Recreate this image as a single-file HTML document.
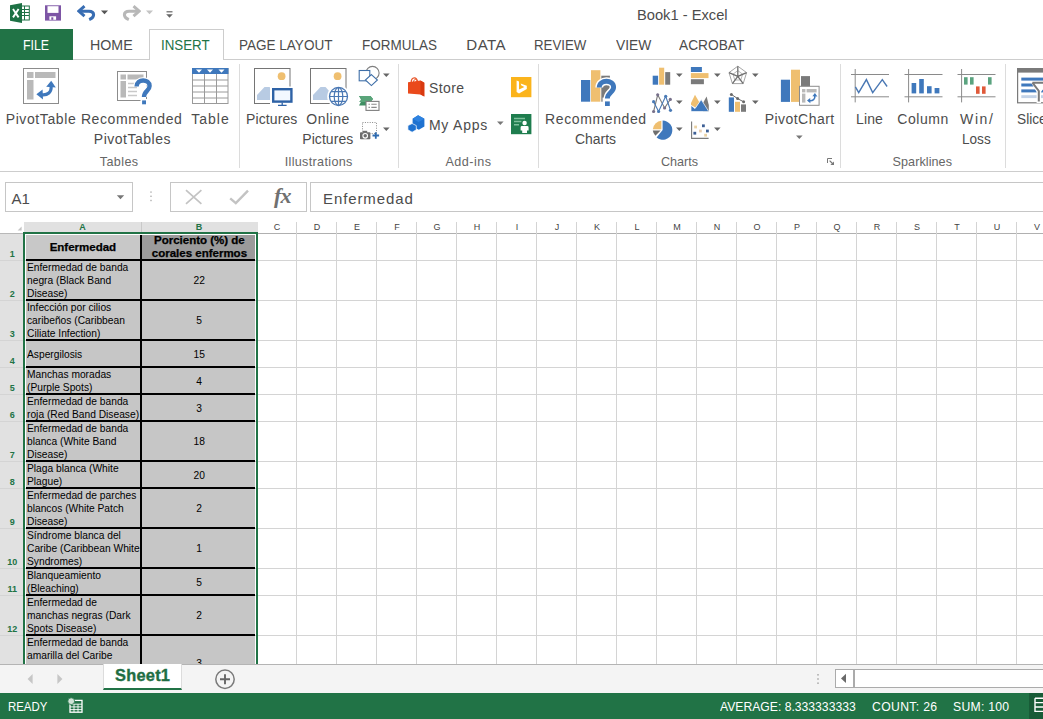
<!DOCTYPE html>
<html><head><meta charset="utf-8"><title>Book1 - Excel</title>
<style>
*{box-sizing:border-box;margin:0;padding:0}
html,body{width:1043px;height:719px;overflow:hidden;background:#fff;font-family:"Liberation Sans",sans-serif;color:#444}
#app{position:relative;width:1043px;height:719px;overflow:hidden;background:#fff}
.abs{position:absolute}
.t{position:absolute;white-space:pre;line-height:1;z-index:5}
/* tabs */
.tab{position:absolute;top:29px;height:30px;font-size:15px;line-height:30px;color:#444;white-space:nowrap}
#file{left:0;top:29px;width:73px;height:31px;z-index:3;background:#217346;color:#fff;text-align:center}
#instab{left:149px;top:29px;width:75px;height:31px;border:1px solid #cdcdcd;border-bottom:none;background:#fff;z-index:2}
#ribline{left:0;top:59px;width:1043px;height:1px;background:#cdcdcd}
#ribbot{left:0;top:171px;width:1043px;height:1px;background:#cdcdcd}
.lbl{position:absolute;font-size:14.5px;color:#444;white-space:nowrap;text-align:center;line-height:20px}
.grp{position:absolute;font-size:13px;color:#666;white-space:nowrap;text-align:center;top:154px;line-height:14px}
.sep{position:absolute;top:64px;width:1px;height:104px;background:#dcdcdc}
/* formula bar */
.box{position:absolute;border:1px solid #c6c6c6;background:#fff}
/* grid */
#grid{left:0;top:222px;width:1043px;height:442px;background:#fff;overflow:hidden}
.vl{position:absolute;top:0;width:1px;height:442px;background:#d4d4d4}
.hl{position:absolute;left:0;height:1px;width:1043px;background:#d4d4d4}
.ch{position:absolute;top:0;height:10px;font-size:9px;line-height:10px;text-align:center;color:#444}
.rh{position:absolute;left:0;width:24.5px;font-size:9px;font-weight:bold;color:#217346;text-align:center;line-height:10px}
.ca{position:absolute;left:26px;width:114px;background:#c6c6c6;font-size:11.2px;line-height:12.8px;color:#000;padding-left:1.2px;display:flex;align-items:center;white-space:nowrap}
.ca>div,.cb>div{transform:scaleX(0.915);transform-origin:0 50%;position:relative;top:0.5px}
.cb>div{transform-origin:50% 50%}
.cb{position:absolute;left:142px;width:113px;padding-left:1px;background:#c6c6c6;font-size:11.2px;line-height:12.8px;color:#000;display:flex;align-items:center;justify-content:center;white-space:nowrap;text-align:center}
.bh{position:absolute;left:26px;width:229px;height:2px;background:#000}
/* bottom */
#tabbar{left:0;top:664px;width:1043px;height:29px;background:#f4f4f4;border-top:1px solid #b4b4b4}
#status{left:0;top:693px;width:1043px;height:26px;background:#217346;color:#fff;font-size:13px}
</style></head><body><div id="app">

<!-- title bar -->

<!-- tabs -->
<div class="abs" id="ribline"></div>
<div class="tab" id="file"></div>
<div class="abs" id="instab"></div>

<!-- texts -->
<div class="t" style="left:636.8px;top:7.6px;font-size:14.8px;color:#4c4c4c;transform:scaleX(0.992);transform-origin:0 0;">Book1 - Excel</div>
<div class="t" style="left:22.8px;top:37.4px;font-size:15.1px;color:#fff;transform:scaleX(0.819);transform-origin:0 0;">FILE</div>
<div class="t" style="left:90.3px;top:37.4px;font-size:15.1px;color:#4c4c4c;transform:scaleX(0.941);transform-origin:0 0;">HOME</div>
<div class="t" style="left:161.0px;top:37.4px;font-size:15.1px;color:#217346;transform:scaleX(0.883);transform-origin:0 0;">INSERT</div>
<div class="t" style="left:239.1px;top:37.4px;font-size:15.1px;color:#4c4c4c;transform:scaleX(0.896);transform-origin:0 0;">PAGE LAYOUT</div>
<div class="t" style="left:362.2px;top:37.4px;font-size:15.1px;color:#4c4c4c;transform:scaleX(0.894);transform-origin:0 0;">FORMULAS</div>
<div class="t" style="left:466.3px;top:37.4px;font-size:15.1px;color:#4c4c4c;letter-spacing:0.43px;">DATA</div>
<div class="t" style="left:534.2px;top:37.4px;font-size:15.1px;color:#4c4c4c;transform:scaleX(0.879);transform-origin:0 0;">REVIEW</div>
<div class="t" style="left:615.6px;top:37.4px;font-size:15.1px;color:#4c4c4c;transform:scaleX(0.915);transform-origin:0 0;">VIEW</div>
<div class="t" style="left:679.4px;top:37.4px;font-size:15.1px;color:#4c4c4c;transform:scaleX(0.909);transform-origin:0 0;">ACROBAT</div>
<div class="t" style="left:5.7px;top:112.3px;font-size:14px;color:#4c4c4c;letter-spacing:0.60px;">PivotTable</div>
<div class="t" style="left:80.9px;top:112.3px;font-size:14px;color:#4c4c4c;letter-spacing:0.60px;">Recommended</div>
<div class="t" style="left:93.8px;top:131.7px;font-size:14px;color:#4c4c4c;letter-spacing:0.51px;">PivotTables</div>
<div class="t" style="left:191.3px;top:112.3px;font-size:14px;color:#4c4c4c;letter-spacing:0.98px;">Table</div>
<div class="t" style="left:246.1px;top:112.3px;font-size:14px;color:#4c4c4c;letter-spacing:0.10px;">Pictures</div>
<div class="t" style="left:306.3px;top:112.3px;font-size:14px;color:#4c4c4c;letter-spacing:0.50px;">Online</div>
<div class="t" style="left:302.3px;top:131.7px;font-size:14px;color:#4c4c4c;letter-spacing:0.06px;">Pictures</div>
<div class="t" style="left:428.9px;top:80.9px;font-size:14px;color:#4c4c4c;letter-spacing:0.45px;">Store</div>
<div class="t" style="left:428.9px;top:118.2px;font-size:14px;color:#4c4c4c;letter-spacing:0.78px;">My Apps</div>
<div class="t" style="left:545.0px;top:112.3px;font-size:14px;color:#4c4c4c;letter-spacing:0.62px;">Recommended</div>
<div class="t" style="left:575.2px;top:131.7px;font-size:14px;color:#4c4c4c;transform:scaleX(0.996);transform-origin:0 0;">Charts</div>
<div class="t" style="left:764.7px;top:112.3px;font-size:14px;color:#4c4c4c;letter-spacing:0.46px;">PivotChart</div>
<div class="t" style="left:856.1px;top:112.3px;font-size:14px;color:#4c4c4c;letter-spacing:0.07px;">Line</div>
<div class="t" style="left:897.3px;top:112.3px;font-size:14px;color:#4c4c4c;letter-spacing:0.55px;">Column</div>
<div class="t" style="left:960.1px;top:112.3px;font-size:14px;color:#4c4c4c;letter-spacing:1.59px;">Win/</div>
<div class="t" style="left:961.8px;top:131.7px;font-size:14px;color:#4c4c4c;transform:scaleX(0.970);transform-origin:0 0;">Loss</div>
<div class="t" style="left:1017.1px;top:112.3px;font-size:14px;color:#4c4c4c;transform:scaleX(0.979);transform-origin:0 0;">Slicer</div>
<div class="t" style="left:99.7px;top:155.8px;font-size:12.6px;color:#666;letter-spacing:0.40px;">Tables</div>
<div class="t" style="left:284.7px;top:155.8px;font-size:12.6px;color:#666;letter-spacing:0.33px;">Illustrations</div>
<div class="t" style="left:445.5px;top:155.8px;font-size:12.6px;color:#666;letter-spacing:0.47px;">Add-ins</div>
<div class="t" style="left:660.9px;top:155.8px;font-size:12.6px;color:#666;letter-spacing:0.02px;">Charts</div>
<div class="t" style="left:892.6px;top:155.8px;font-size:12.6px;color:#666;letter-spacing:0.06px;">Sparklines</div>
<div class="t" style="left:11.4px;top:190.7px;font-size:15px;color:#4c4c4c;letter-spacing:0.04px;">A1</div>
<div class="t" style="left:323.1px;top:190.6px;font-size:15px;color:#4c4c4c;letter-spacing:0.88px;">Enfermedad</div>
<div class="t" style="left:115.0px;top:667.3px;font-size:16.4px;color:#1f6e43;letter-spacing:0.24px;font-weight:bold;-webkit-text-stroke:0.35px #1f6e43;">Sheet1</div>
<div class="t" style="left:8.0px;top:701.3px;font-size:12.2px;color:#fff;transform:scaleX(0.937);transform-origin:0 0;">READY</div>
<div class="t" style="left:720.3px;top:701.3px;font-size:12.2px;color:#fff;transform:scaleX(0.998);transform-origin:0 0;">AVERAGE: 8.333333333</div>
<div class="t" style="left:872.1px;top:701.3px;font-size:12.2px;color:#fff;letter-spacing:0.34px;">COUNT: 26</div>
<div class="t" style="left:953.1px;top:701.3px;font-size:12.2px;color:#fff;letter-spacing:0.24px;">SUM: 100</div>
<!-- ribbon -->
<div class="abs" id="ribbot"></div>
<!-- QAT -->
<svg class="abs" style="left:9px;top:2px" width="22" height="22" viewBox="0 0 22 22">
<rect x="11" y="4" width="9.3" height="14" fill="#fff" stroke="#1e7145" stroke-width="1"/>
<path d="M11 7.5h9M11 10.5h9M11 13.5h9M15.5 4v14" stroke="#1e7145" stroke-width="1" fill="none"/>
<path d="M1 3.2 L13 1 V21 L1 18.8Z" fill="#1e7145"/>
<path d="M4 7 L9.6 15.4 M9.6 7 L4 15.4" stroke="#fff" stroke-width="1.9" fill="none"/>
</svg>
<svg class="abs" style="left:45px;top:5px" width="16" height="16" viewBox="0 0 16 16">
<path d="M0 0.3H16V15.6H0Z" fill="#7d55a5"/>
<rect x="2.5" y="1.2" width="11" height="6.7" fill="#fff"/>
<rect x="4.4" y="11.3" width="6.7" height="3.5" fill="#fff"/>
<rect x="6.3" y="12.3" width="2" height="2.5" fill="#7d55a5"/>
</svg>
<svg class="abs" style="left:77px;top:5px" width="20" height="17" viewBox="0 0 20 17">
<path d="M7.5 1.2 L1.8 6.2 L7.5 11.2" fill="none" stroke="#386db3" stroke-width="2.9" stroke-linejoin="miter"/>
<path d="M3 6.2 H12 C17.5 6.2 18.6 12 12.2 14.6" fill="none" stroke="#386db3" stroke-width="3.1"/>
</svg>
<svg class="abs" style="left:100px;top:10px" width="9" height="5" viewBox="0 0 9 5"><path d="M1 0.5H8L4.5 4.2Z" fill="#555"/></svg>
<svg class="abs" style="left:121px;top:5px" width="20" height="17" viewBox="0 0 20 17">
<path d="M12.5 1.2 L18.2 6.2 L12.5 11.2" fill="none" stroke="#b8b8b8" stroke-width="2.9"/>
<path d="M17 6.2 H8 C2.5 6.2 1.4 12 7.8 14.6" fill="none" stroke="#b8b8b8" stroke-width="3.1"/>
</svg>
<svg class="abs" style="left:145px;top:10px" width="9" height="5" viewBox="0 0 9 5"><path d="M1 0.5H8L4.5 4.2Z" fill="#c4c4c4"/></svg>
<svg class="abs" style="left:165px;top:9.5px" width="9" height="9" viewBox="0 0 9 9"><path d="M1.5 1.8H7.5" stroke="#666" stroke-width="1.2"/><path d="M1.2 4.2H7.8L4.5 7.8Z" fill="#666"/></svg>

<!-- separators -->
<div class="sep" style="left:239px"></div>
<div class="sep" style="left:398px"></div>
<div class="sep" style="left:538px"></div>
<div class="sep" style="left:840px"></div>
<div class="sep" style="left:1005px"></div>

<!-- Tables group icons -->
<svg class="abs" style="left:23px;top:67px" width="37" height="38" viewBox="0 0 37 38">
<rect x="0.5" y="1.5" width="35" height="35" fill="#fff" stroke="#8c8c8c"/>
<rect x="4" y="5" width="6.5" height="6" fill="#b9b9b9"/>
<rect x="12" y="5" width="20.5" height="6" fill="#b9b9b9"/>
<rect x="4" y="13" width="6.5" height="19.5" fill="#b9b9b9"/>
<path d="M17 27.5 C25 29 29 25 28 18.5" fill="none" stroke="#3f78bc" stroke-width="3.2"/>
<path d="M23.2 19.8 L28.2 13.8 L32.8 20.4Z" fill="#3f78bc"/>
<path d="M19.6 22.6 L13.4 27.2 L20 32.4Z" fill="#3f78bc"/>
</svg>
<svg class="abs" style="left:117px;top:70px" width="38" height="38" viewBox="0 0 38 38">
<rect x="0.5" y="1.5" width="29" height="29" fill="#fff" stroke="#8c8c8c"/>
<rect x="3.5" y="4.5" width="5.5" height="5" fill="#b9b9b9"/>
<rect x="10.5" y="4.5" width="16" height="5" fill="#b9b9b9"/>
<rect x="3.5" y="11" width="5.5" height="16.5" fill="#b9b9b9"/>
<path d="M11 13.5h9M11 17.5h9M11 21.5h9M11 25.5h9" stroke="#c9c9c9" stroke-width="1.4"/>
<path d="M19.6 16.5 C19.6 8.5 32.6 8.5 32.6 16 C32.6 21 27 21 27 27" fill="none" stroke="#fff" stroke-width="6.5"/>
<rect x="23.5" y="29" width="7" height="6.5" fill="#fff"/>
<path d="M19.6 16.5 C19.6 8.5 32.6 8.5 32.6 16 C32.6 21 27 21 27 27" fill="none" stroke="#3f78bc" stroke-width="4.4"/>
<rect x="25.1" y="30.4" width="3.9" height="3.9" fill="#3f78bc"/>
</svg>
<svg class="abs" style="left:192px;top:68px" width="37" height="37" viewBox="0 0 37 37">
<rect x="0.5" y="0.5" width="35.5" height="35" fill="#fff" stroke="#9a9a9a"/>
<rect x="0" y="0" width="36.5" height="6" fill="#3f78bc"/>
<path d="M4 1.6h6l-3 3.2zM15 1.6h6l-3 3.2zM26.5 1.6h6l-3 3.2z" fill="#fff"/>
<path d="M12.5 6v30M24.5 6v30M0 12h36M0 18h36M0 24h36M0 30h36" stroke="#9a9a9a" stroke-width="1" fill="none"/>
</svg>

<!-- Illustrations group icons -->
<svg class="abs" style="left:253px;top:67px" width="40" height="40" viewBox="0 0 40 40">
<rect x="1.5" y="1.5" width="35.5" height="35" fill="#fff" stroke="#757575"/>
<circle cx="28.6" cy="9.2" r="3.9" fill="#efbf70"/>
<path d="M4 33 V28 L11.5 20 H16.5 L22 26 V33Z" fill="#b8cbe3"/>
<rect x="17" y="19.5" width="23" height="17.5" fill="#fff"/>
<rect x="20.2" y="22.2" width="18.2" height="12.4" fill="#f3f8ff" stroke="#2e62a6" stroke-width="2.4"/>
<path d="M29.2 35.6v2.6M25 38.4h8.6" stroke="#2e62a6" stroke-width="1.3" fill="none"/>
</svg>
<svg class="abs" style="left:309px;top:67px" width="42" height="42" viewBox="0 0 42 42">
<rect x="1.5" y="1.5" width="35.5" height="35" fill="#fff" stroke="#757575"/>
<circle cx="28.6" cy="9.2" r="3.9" fill="#efbf70"/>
<path d="M4 33 V28 L11.5 20 H16.5 L22 26 V33Z" fill="#b8cbe3"/>
<circle cx="29.5" cy="29.5" r="11.3" fill="#fff"/>
<circle cx="29.5" cy="29.5" r="9" fill="#fff" stroke="#4a78b4" stroke-width="1.3"/>
<ellipse cx="29.5" cy="29.5" rx="4.3" ry="9" fill="none" stroke="#4a78b4" stroke-width="1.2"/>
<path d="M29.5 20.5v18M20.5 29.5h18M22 24.6h15M22 34.4h15" stroke="#4a78b4" stroke-width="1.2" fill="none"/>
</svg>
<svg class="abs" style="left:358px;top:65px" width="24" height="22" viewBox="0 0 24 22">
<circle cx="14.5" cy="8" r="6.6" fill="#fff" stroke="#7f7f7f" stroke-width="1.1"/>
<rect x="1.2" y="5.5" width="10.6" height="10.3" fill="#fff" stroke="#3f6fa8" stroke-width="1.1"/>
<path d="M13.4 9.6 L19.4 15 L13.4 20.6 L7.4 15Z" fill="#fff" stroke="#3f6fa8" stroke-width="1.1"/>
</svg>
<svg class="abs" style="left:382px;top:73px" width="9" height="5" viewBox="0 0 9 5"><path d="M1 0.5H7.6L4.3 4Z" fill="#666"/></svg>
<svg class="abs" style="left:358px;top:95px" width="24" height="18" viewBox="0 0 24 18">
<path d="M1 1 H12.5 L15 4 L12.5 7 H8 V10.5 H1 L3.6 5.8Z" fill="#3f8f63"/>
<path d="M1 1 H12.5 L15 4 L12.5 7 H1 L3.6 4Z" fill="#5aa57a"/>
<rect x="8" y="6.4" width="13" height="9" fill="#fff" stroke="#7f7f7f" stroke-width="1.1"/>
<path d="M10.5 9.3h1.4M13.3 9.3h5.4M10.5 12.4h1.4M13.3 12.4h5.4" stroke="#8a8a8a" stroke-width="1.1"/>
</svg>
<svg class="abs" style="left:359px;top:121px" width="24" height="20" viewBox="0 0 24 20">
<rect x="3.5" y="1.5" width="14" height="11" fill="none" stroke="#8a8a8a" stroke-width="1" stroke-dasharray="1 1.4"/>
<rect x="1" y="11.2" width="10.4" height="7" rx="0.8" fill="#6e6e6e"/>
<rect x="4" y="9.8" width="4.2" height="2" fill="#6e6e6e"/>
<circle cx="6.2" cy="14.8" r="2.3" fill="#6e6e6e" stroke="#fff" stroke-width="1.1"/>
<path d="M16.8 11.2v6.6M13.5 14.5h6.6" stroke="#2e6bb0" stroke-width="1.8"/>
</svg>
<svg class="abs" style="left:382px;top:127px" width="9" height="5" viewBox="0 0 9 5"><path d="M1 0.5H7.6L4.3 4Z" fill="#666"/></svg>

<!-- Add-ins group icons -->
<svg class="abs" style="left:407px;top:76px" width="19" height="22" viewBox="0 0 19 22">
<path d="M4.2 6.5 C4.2 0.5 10.4 0.5 10.4 6" fill="none" stroke="#e8562a" stroke-width="1.3"/>
<path d="M6.4 6.5 C6.4 2.5 10.4 2.5 10.4 6" fill="none" stroke="#e8562a" stroke-width="1"/>
<path d="M1 6.2 L13.5 4.6 L17.3 6.8 V20.4 L13.5 18.4 L1 17.4Z" fill="#ea4a1c"/>
<path d="M13.5 4.6 L17.3 6.8 V20.4 L13.5 18.4Z" fill="#d83a10"/>
</svg>
<svg class="abs" style="left:407px;top:114px" width="19" height="19" viewBox="0 0 19 19">
<path d="M11.1 1.2 L17.4 4.8 V12.4 L11.8 15.8 L5.6 12.4 V4.8Z" fill="#1f72d0"/>
<path d="M11.1 1.2 L17.4 4.8 L11.6 8 L5.6 4.8Z" fill="#2f83e0"/>
<path d="M5.1 9.5 L9.3 11.6 V15.8 L5.1 18.2 L0.9 15.8 V11.6Z" fill="#1f72d0" stroke="#fff" stroke-width="0.7"/>
</svg>
<svg class="abs" style="left:496px;top:121px" width="9" height="5" viewBox="0 0 9 5"><path d="M1 0.5H7.6L4.3 4Z" fill="#777"/></svg>
<svg class="abs" style="left:511px;top:77px" width="21" height="21" viewBox="0 0 21 21">
<rect x="0" y="0" width="20.4" height="20.2" fill="#fbb41c"/>
<path d="M5.6 3.4 L8 4.4 V12.6 L13.4 10 L10.4 8.6 L9.6 6.6 L15.8 8.8 V12 L8 16.6 L5.6 15Z" fill="#fff"/>
</svg>
<svg class="abs" style="left:511px;top:114px" width="21" height="21" viewBox="0 0 21 21">
<rect x="0" y="0" width="20.4" height="20.2" fill="#1e7d4e"/>
<path d="M3 4.4h11M3 7.6h7.4M3 10.8h5" stroke="#7cc09b" stroke-width="1.5"/>
<circle cx="13.6" cy="9" r="2.2" fill="#fff"/>
<path d="M9.6 13.4 Q9.6 12 11 12 H16.2 Q17.6 12 17.6 13.4 V16.4 H16 V19 H11.2 V16.4 H9.6Z" fill="#fff"/>
</svg>

<!-- Charts group icons -->
<svg class="abs" style="left:580px;top:69px" width="38" height="39" viewBox="0 0 38 39">
<rect x="1" y="11" width="9.2" height="21.7" fill="#3f78bc"/>
<rect x="11" y="1.2" width="9.4" height="31.5" fill="#efbf70"/>
<rect x="21.3" y="6.7" width="8.6" height="26" fill="#7a7a7a"/>
<path d="M19.2 18.6 C19.2 10.2 33.6 10.2 33.6 18.2 C33.6 23.4 27.4 23.6 27.4 30" fill="none" stroke="#fff" stroke-width="7.8"/>
<rect x="22.6" y="28.6" width="9.4" height="10" fill="#fff"/>
<path d="M19.2 18.6 C19.2 10.2 33.6 10.2 33.6 18.2 C33.6 23.4 27.4 23.6 27.4 29.6" fill="none" stroke="#3f78bc" stroke-width="4.9"/>
<rect x="25" y="32.4" width="4.8" height="4.6" fill="#3f78bc"/>
</svg>
<!-- column small -->
<svg class="abs" style="left:652px;top:67px" width="20" height="19" viewBox="0 0 20 19">
<rect x="0.7" y="8.7" width="5.4" height="9" fill="#3f78bc"/>
<rect x="7.1" y="0.7" width="5.1" height="17" fill="#efbf70"/>
<rect x="13.2" y="5.1" width="5" height="12.6" fill="#7a7a7a"/>
</svg>
<svg class="abs" style="left:675px;top:73px" width="9" height="5" viewBox="0 0 9 5"><path d="M1 0.5H7.6L4.3 4Z" fill="#666"/></svg>
<!-- bar small -->
<svg class="abs" style="left:690px;top:66px" width="20" height="19" viewBox="0 0 20 19">
<rect x="0.9" y="1" width="11" height="5" fill="#3f78bc"/>
<rect x="0.9" y="7.1" width="17.6" height="5" fill="#efbf70"/>
<rect x="0.9" y="13.2" width="13" height="5" fill="#7a7a7a"/>
</svg>
<svg class="abs" style="left:713px;top:73px" width="9" height="5" viewBox="0 0 9 5"><path d="M1 0.5H7.6L4.3 4Z" fill="#666"/></svg>
<!-- radar -->
<svg class="abs" style="left:728px;top:65px" width="20" height="21" viewBox="0 0 20 21">
<path d="M9.8 1.2 L18.6 7.6 L15.2 18.6 H4.4 L1 7.6Z" fill="none" stroke="#9a9a9a" stroke-width="0.9"/>
<path d="M9.8 5.6 L14.6 9.2 L12.8 15 H6.8 L5 9.2Z" fill="none" stroke="#a5a5a5" stroke-width="0.8"/>
<path d="M9.8 1.2V11.4L18.6 7.6M9.8 11.4L15.2 18.6M9.8 11.4L4.4 18.6M9.8 11.4L1 7.6" fill="none" stroke="#6e6e6e" stroke-width="1.3"/>
</svg>
<svg class="abs" style="left:751px;top:73px" width="9" height="5" viewBox="0 0 9 5"><path d="M1 0.5H7.6L4.3 4Z" fill="#666"/></svg>
<!-- line small -->
<svg class="abs" style="left:652px;top:92px" width="22" height="22" viewBox="0 0 22 22">
<path d="M1.6 19.5 L5.7 2.8 L12.6 16 L18.3 7.4" fill="none" stroke="#7a7a7a" stroke-width="1.1"/>
<path d="M1.6 9.7 L6.6 19.5 L13.7 4.3 L18.5 18.3" fill="none" stroke="#4a7ab5" stroke-width="1.1"/>
<g fill="#77708a"><circle cx="1.6" cy="19.5" r="1.6"/><circle cx="5.7" cy="2.8" r="1.6"/><circle cx="12.6" cy="16" r="1.6"/><circle cx="18.3" cy="7.4" r="1.6"/></g>
<g fill="#4a7ab5"><circle cx="1.6" cy="9.7" r="1.6"/><circle cx="6.6" cy="19.5" r="1.6"/><circle cx="13.7" cy="4.3" r="1.6"/><circle cx="18.5" cy="18.3" r="1.6"/></g>
</svg>
<svg class="abs" style="left:675px;top:100px" width="9" height="5" viewBox="0 0 9 5"><path d="M1 0.5H7.6L4.3 4Z" fill="#666"/></svg>
<!-- area small -->
<svg class="abs" style="left:690px;top:93px" width="20" height="20" viewBox="0 0 20 20">
<path d="M13 10 L16.6 3.4 L18.8 12 V18.6 H13Z" fill="#7a7a7a"/>
<path d="M1 10 L5 1.8 L9.4 9.6 L5.4 14.6 L1 12Z" fill="#efbf70"/>
<path d="M1 12.4 L5 15.6 L11.2 6.6 L18.8 18.6 H1Z" fill="#3f78bc" stroke="#fff" stroke-width="0.7"/>
</svg>
<svg class="abs" style="left:713px;top:100px" width="9" height="5" viewBox="0 0 9 5"><path d="M1 0.5H7.6L4.3 4Z" fill="#666"/></svg>
<!-- combo small -->
<svg class="abs" style="left:728px;top:92px" width="20" height="21" viewBox="0 0 20 21">
<rect x="0.8" y="5.4" width="5.2" height="14.4" fill="#3f78bc"/>
<rect x="7" y="9.8" width="5" height="10" fill="#efbf70"/>
<rect x="13" y="12.4" width="5" height="7.4" fill="#7a7a7a"/>
<path d="M3.4 2.4 L9.6 6.6 L15.6 9.8" fill="none" stroke="#6a6a6a" stroke-width="1"/>
<g fill="#6a6a6a"><circle cx="3.4" cy="2.4" r="1.5"/><circle cx="9.6" cy="6.6" r="1.5"/><circle cx="15.6" cy="9.8" r="1.5"/></g>
</svg>
<svg class="abs" style="left:751px;top:100px" width="9" height="5" viewBox="0 0 9 5"><path d="M1 0.5H7.6L4.3 4Z" fill="#666"/></svg>
<!-- pie small -->
<svg class="abs" style="left:652px;top:120px" width="21" height="21" viewBox="0 0 21 21">
<path d="M10.6 10 V0.6 A9.6 9.6 0 1 1 4.6 17.6Z" fill="#3f78bc"/>
<path d="M9.4 9.2 V0.8 A9.2 9.2 0 0 0 0.8 9.2Z" fill="#efbf70"/>
<path d="M0.8 10.6 H8.6 L3.4 15.8 A9.2 9.2 0 0 1 0.8 10.6Z" fill="#6e6e6e"/>
</svg>
<svg class="abs" style="left:675px;top:127px" width="9" height="5" viewBox="0 0 9 5"><path d="M1 0.5H7.6L4.3 4Z" fill="#666"/></svg>
<!-- scatter small -->
<svg class="abs" style="left:690px;top:120px" width="20" height="20" viewBox="0 0 20 20">
<path d="M1.6 1.4 V18.4 H18.6" fill="none" stroke="#7a7a7a" stroke-width="1.1"/>
<rect x="4.2" y="5.6" width="2.8" height="2.8" fill="#ead2a4"/><rect x="12" y="4.4" width="2.8" height="2.8" fill="#3d5f95"/>
<rect x="3.4" y="11.8" width="2.8" height="2.8" fill="#3d5f95"/><rect x="9" y="9.6" width="2.8" height="2.8" fill="#e8cdb0"/>
<rect x="16" y="9.6" width="2.8" height="2.8" fill="#3d5f95"/><rect x="14.2" y="13.8" width="2.8" height="2.8" fill="#ead2a4"/>
</svg>
<svg class="abs" style="left:713px;top:127px" width="9" height="5" viewBox="0 0 9 5"><path d="M1 0.5H7.6L4.3 4Z" fill="#666"/></svg>
<!-- PivotChart -->
<svg class="abs" style="left:780px;top:68px" width="41" height="39" viewBox="0 0 41 39">
<rect x="0.9" y="11.7" width="9.1" height="22.2" fill="#3f78bc"/>
<rect x="11" y="1.7" width="9" height="32.2" fill="#efbf70"/>
<rect x="21" y="8.1" width="9" height="12" fill="#7a7a7a"/>
<rect x="19.5" y="18.3" width="19.6" height="19" fill="#fff" stroke="#8c8c8c" stroke-width="1"/>
<rect x="22" y="21" width="3.4" height="3.4" fill="#b9b9b9"/><rect x="26.6" y="21" width="10" height="3.4" fill="#b9b9b9"/>
<rect x="22" y="25.6" width="3.4" height="9" fill="#b9b9b9"/>
<path d="M28.6 32.6 C33 33.4 35.4 31 34.8 27.4" fill="none" stroke="#3f78bc" stroke-width="1.6"/>
<path d="M32.4 28.2 L34.9 25 L37.4 28.4Z" fill="#3f78bc"/><path d="M30.2 30 L27 32.4 L30.4 35.2Z" fill="#3f78bc"/>
</svg>
<svg class="abs" style="left:795px;top:135px" width="9" height="5" viewBox="0 0 9 5"><path d="M1 0.5H7.6L4.3 4Z" fill="#777"/></svg>
<!-- dialog launcher -->
<svg class="abs" style="left:827px;top:158px" width="8" height="8" viewBox="0 0 8 8">
<path d="M0.5 5V0.5H5" fill="none" stroke="#777" stroke-width="1"/>
<path d="M2.6 2.6L6 6" stroke="#777" stroke-width="1.2"/><path d="M3.4 7H7V3.4Z" fill="#777"/>
</svg>

<!-- Sparklines group icons -->
<svg class="abs" style="left:850px;top:68px" width="40" height="36" viewBox="0 0 40 36">
<path d="M1 6.5H39M1 28.8H39M5.2 1V34.4" fill="none" stroke="#8a8a8a" stroke-width="1"/>
<path d="M5.4 18.8 L8.7 24.6 L16.4 11.6 L22.7 24.6 L32.3 11.6 L37.1 18.5" fill="none" stroke="#4a78b4" stroke-width="1.4"/>
</svg>
<svg class="abs" style="left:904px;top:68px" width="40" height="36" viewBox="0 0 40 36">
<path d="M0.5 6.5H38.5M0.5 28.8H38.5M4.6 1V34.4" fill="none" stroke="#8a8a8a" stroke-width="1"/>
<rect x="7.6" y="15" width="4.6" height="10.4" fill="#3f78bc"/>
<rect x="15.2" y="11" width="4.6" height="14.4" fill="#3f78bc"/>
<rect x="23" y="18.2" width="4.6" height="7.2" fill="#3f78bc"/>
<rect x="30.6" y="20" width="4.8" height="5.4" fill="#3f78bc"/>
</svg>
<svg class="abs" style="left:957px;top:68px" width="40" height="36" viewBox="0 0 40 36">
<path d="M0.5 6.5H38.5M0.5 28.8H38.5M4.6 1V34.4" fill="none" stroke="#8a8a8a" stroke-width="1"/>
<rect x="7" y="9.2" width="3.6" height="7.4" fill="#5aa37f"/><rect x="13" y="9.2" width="3.6" height="7.4" fill="#5aa37f"/>
<rect x="19" y="18.4" width="3.6" height="7.4" fill="#e05a3a"/><rect x="25" y="18.4" width="3.6" height="7.4" fill="#e05a3a"/>
<rect x="31" y="9.2" width="3.6" height="7.4" fill="#5aa37f"/>
</svg>
<!-- Slicer (clipped) -->
<svg class="abs" style="left:1017px;top:67px" width="30" height="38" viewBox="0 0 30 38">
<rect x="0.6" y="1.6" width="36" height="34.2" fill="#fff" stroke="#7a7a7a" stroke-width="1.2"/>
<rect x="0" y="1" width="36" height="4.6" fill="#7a7a7a"/>
<rect x="4.3" y="10.6" width="24" height="3" fill="#3f78bc"/>
<rect x="4.3" y="16.5" width="24" height="3" fill="#3f78bc"/>
<rect x="4.3" y="22.4" width="24" height="3" fill="#3f78bc"/>
<rect x="4.3" y="28.2" width="24" height="2.9" fill="#c3d3e8"/>
<path d="M13.4 14.4 H30 V17 L24 25 V36 H19.6 V25Z" fill="#fff"/>
<path d="M15.4 15.8 H30 M15.4 15.6 L21.8 24 V34.6" fill="none" stroke="#7a7a7a" stroke-width="2"/>
</svg>
<!-- formula bar -->
<div class="box" style="left:5px;top:182px;width:128px;height:30px"></div>
<svg class="abs" style="left:116px;top:195px" width="9" height="5" viewBox="0 0 9 5"><path d="M0.8 0.3H8.2L4.5 4.2Z" fill="#777"/></svg>
<svg class="abs" style="left:149px;top:190px" width="4" height="13" viewBox="0 0 4 13"><g fill="#b0b0b0"><rect x="1.3" y="1.4" width="1.4" height="1.4"/><rect x="1.3" y="5.6" width="1.4" height="1.4"/><rect x="1.3" y="9.8" width="1.4" height="1.4"/></g></svg>
<div class="box" style="left:170px;top:182px;width:137px;height:30px"></div>
<svg class="abs" style="left:184px;top:188px" width="20" height="18" viewBox="0 0 20 18"><path d="M2 2.2L17.4 15.8M17.4 2.2L2 15.8" stroke="#c3c3c3" stroke-width="1.7" fill="none"/></svg>
<svg class="abs" style="left:228px;top:188px" width="22" height="18" viewBox="0 0 22 18"><path d="M2.2 10.4L7.8 15.2L20 2.6" stroke="#c3c3c3" stroke-width="2.4" fill="none"/></svg>
<div class="t" style="left:274px;top:185px;font-family:'Liberation Serif',serif;font-style:italic;font-weight:bold;font-size:22px;color:#707070;letter-spacing:-0.8px">fx</div>
<div class="box" style="left:310px;top:182px;width:740px;height:30px"></div>
<!-- grid -->
<div class="abs" id="grid">
<div class="abs" style="left:24px;top:0;width:234px;height:10px;background:#e1e1e1"></div>
<div class="abs" style="left:0;top:11px;width:23px;height:431px;background:#e1e1e1"></div>
<div class="abs" style="left:0;top:11px;width:23px;height:1px;background:#b8b8b8"></div>
<svg class="abs" style="left:17px;top:4px" width="5" height="5" viewBox="0 0 5 5"><path d="M4.6 0.6V4.6H0.6Z" fill="#c4c4c4"/></svg>
<div class="abs" style="left:258px;top:11px;width:800px;height:1px;background:#b0b0b0"></div>
<div class="vl" style="left:296px"></div>
<div class="vl" style="left:336px"></div>
<div class="vl" style="left:376px"></div>
<div class="vl" style="left:416px"></div>
<div class="vl" style="left:456px"></div>
<div class="vl" style="left:496px"></div>
<div class="vl" style="left:536px"></div>
<div class="vl" style="left:576px"></div>
<div class="vl" style="left:616px"></div>
<div class="vl" style="left:656px"></div>
<div class="vl" style="left:696px"></div>
<div class="vl" style="left:736px"></div>
<div class="vl" style="left:776px"></div>
<div class="vl" style="left:816px"></div>
<div class="vl" style="left:856px"></div>
<div class="vl" style="left:896px"></div>
<div class="vl" style="left:936px"></div>
<div class="vl" style="left:976px"></div>
<div class="vl" style="left:1016px"></div>
<div class="vl" style="left:1056px"></div>
<div class="abs" style="left:141px;top:0;width:1px;height:10px;background:#c9c9c9"></div>
<div class="hl" style="top:38px"></div>
<div class="hl" style="top:78px"></div>
<div class="hl" style="top:118px"></div>
<div class="hl" style="top:145px"></div>
<div class="hl" style="top:172px"></div>
<div class="hl" style="top:199px"></div>
<div class="hl" style="top:239px"></div>
<div class="hl" style="top:266px"></div>
<div class="hl" style="top:306px"></div>
<div class="hl" style="top:346px"></div>
<div class="hl" style="top:373px"></div>
<div class="hl" style="top:413px"></div>
<div class="hl" style="top:466px"></div>
<div class="ch" style="left:24px;width:117px;color:#217346;font-weight:bold">A</div>
<div class="ch" style="left:141px;width:116px;color:#217346;font-weight:bold">B</div>
<div class="ch" style="left:257px;width:40px">C</div>
<div class="ch" style="left:297px;width:40px">D</div>
<div class="ch" style="left:337px;width:40px">E</div>
<div class="ch" style="left:377px;width:40px">F</div>
<div class="ch" style="left:417px;width:40px">G</div>
<div class="ch" style="left:457px;width:40px">H</div>
<div class="ch" style="left:497px;width:40px">I</div>
<div class="ch" style="left:537px;width:40px">J</div>
<div class="ch" style="left:577px;width:40px">K</div>
<div class="ch" style="left:617px;width:40px">L</div>
<div class="ch" style="left:657px;width:40px">M</div>
<div class="ch" style="left:697px;width:40px">N</div>
<div class="ch" style="left:737px;width:40px">O</div>
<div class="ch" style="left:777px;width:40px">P</div>
<div class="ch" style="left:817px;width:40px">Q</div>
<div class="ch" style="left:857px;width:40px">R</div>
<div class="ch" style="left:897px;width:40px">S</div>
<div class="ch" style="left:937px;width:40px">T</div>
<div class="ch" style="left:977px;width:40px">U</div>
<div class="ch" style="left:1017px;width:40px">V</div>
<div class="rh" style="top:27px">1</div>
<div class="ca" style="top:13px;height:24px;background:#c8c8c8;font-weight:bold;justify-content:center;font-size:10px;line-height:13.1px;padding:0;-webkit-text-stroke:0.25px #000"><div style="transform:scaleX(1.15);transform-origin:50% 50%;top:0.3px">Enfermedad</div></div>
<div class="cb" style="top:13px;height:24px;background:#9b9b9b;font-weight:bold;font-size:10px;line-height:13.1px;-webkit-text-stroke:0.25px #000"><div style="transform:scaleX(1.15);top:0.3px">Porciento (%) de<br>corales enfermos</div></div>
<div class="bh" style="top:37px"></div>
<div class="rh" style="top:67px">2</div>
<div class="ca" style="top:39px;height:38px"><div>Enfermedad de banda<br>negra (Black Band<br>Disease)</div></div>
<div class="cb" style="top:39px;height:38px"><div>22</div></div>
<div class="bh" style="top:77px"></div>
<div class="rh" style="top:107px">3</div>
<div class="ca" style="top:79px;height:38px"><div>Infección por cilios<br>caribeños (Caribbean<br>Ciliate Infection)</div></div>
<div class="cb" style="top:79px;height:38px"><div>5</div></div>
<div class="bh" style="top:117px"></div>
<div class="rh" style="top:134px">4</div>
<div class="ca" style="top:119px;height:25px"><div>Aspergilosis</div></div>
<div class="cb" style="top:119px;height:25px"><div>15</div></div>
<div class="bh" style="top:144px"></div>
<div class="rh" style="top:161px">5</div>
<div class="ca" style="top:146px;height:25px"><div>Manchas moradas<br>(Purple Spots)</div></div>
<div class="cb" style="top:146px;height:25px"><div>4</div></div>
<div class="bh" style="top:171px"></div>
<div class="rh" style="top:188px">6</div>
<div class="ca" style="top:173px;height:25px"><div>Enfermedad de banda<br>roja (Red Band Disease)</div></div>
<div class="cb" style="top:173px;height:25px"><div>3</div></div>
<div class="bh" style="top:198px"></div>
<div class="rh" style="top:228px">7</div>
<div class="ca" style="top:200px;height:38px"><div>Enfermedad de banda<br>blanca (White Band<br>Disease)</div></div>
<div class="cb" style="top:200px;height:38px"><div>18</div></div>
<div class="bh" style="top:238px"></div>
<div class="rh" style="top:255px">8</div>
<div class="ca" style="top:240px;height:25px"><div>Plaga blanca (White<br>Plague)</div></div>
<div class="cb" style="top:240px;height:25px"><div>20</div></div>
<div class="bh" style="top:265px"></div>
<div class="rh" style="top:295px">9</div>
<div class="ca" style="top:267px;height:38px"><div>Enfermedad de parches<br>blancos (White Patch<br>Disease)</div></div>
<div class="cb" style="top:267px;height:38px"><div>2</div></div>
<div class="bh" style="top:305px"></div>
<div class="rh" style="top:335px">10</div>
<div class="ca" style="top:307px;height:38px"><div>Síndrome blanca del<br>Caribe (Caribbean White<br>Syndromes)</div></div>
<div class="cb" style="top:307px;height:38px"><div>1</div></div>
<div class="bh" style="top:345px"></div>
<div class="rh" style="top:362px">11</div>
<div class="ca" style="top:347px;height:25px"><div>Blanqueamiento<br>(Bleaching)</div></div>
<div class="cb" style="top:347px;height:25px"><div>5</div></div>
<div class="bh" style="top:372px"></div>
<div class="rh" style="top:402px">12</div>
<div class="ca" style="top:374px;height:38px"><div>Enfermedad de<br>manchas negras (Dark<br>Spots Disease)</div></div>
<div class="cb" style="top:374px;height:38px"><div>2</div></div>
<div class="bh" style="top:412px"></div>
<div class="rh" style="top:455px">13</div>
<div class="ca" style="top:414px;height:51px"><div>Enfermedad de banda<br>amarilla del Caribe<br>(Caribbean Yellow Band<br>Disease)</div></div>
<div class="cb" style="top:414px;height:51px;padding-top:2px"><div>3</div></div>
<div class="bh" style="top:465px"></div>
<div class="abs" style="left:140px;top:13px;width:2px;height:430px;background:#000"></div>
<div class="abs" style="left:23px;top:10px;width:235px;height:2px;background:#217346"></div>
<div class="abs" style="left:23px;top:10px;width:2px;height:432px;background:#217346"></div>
<div class="abs" style="left:256px;top:10px;width:2px;height:432px;background:#217346"></div>
</div>

<!-- bottom -->
<div class="abs" id="tabbar"></div>
<svg class="abs" style="left:26px;top:673px" width="8" height="12" viewBox="0 0 8 12"><path d="M6.6 1L1.6 6L6.6 11Z" fill="#c6c6c6"/></svg>
<svg class="abs" style="left:56px;top:673px" width="8" height="12" viewBox="0 0 8 12"><path d="M1.4 1L6.4 6L1.4 11Z" fill="#c6c6c6"/></svg>
<div class="abs" style="left:103px;top:664px;width:79px;height:26px;background:#fff;border-bottom:2px solid #217346;border-left:1px solid #dcdcdc;border-right:1px solid #dcdcdc"></div>
<svg class="abs" style="left:214px;top:668px" width="22" height="22" viewBox="0 0 22 22"><circle cx="11" cy="11.2" r="9.2" fill="none" stroke="#7a7a7a" stroke-width="1.5"/><path d="M11 6.2v10M6 11.2h10" stroke="#666" stroke-width="1.9"/></svg>
<svg class="abs" style="left:816px;top:672px" width="4" height="14" viewBox="0 0 4 14"><g fill="#b0b0b0"><rect x="1.2" y="2" width="1.6" height="1.6"/><rect x="1.2" y="6.2" width="1.6" height="1.6"/><rect x="1.2" y="10.4" width="1.6" height="1.6"/></g></svg>
<div class="abs" style="left:835px;top:669px;width:19px;height:19px;background:#fff;border:1px solid #ababab"></div>
<svg class="abs" style="left:839px;top:672px" width="9" height="13" viewBox="0 0 9 13"><path d="M7 1.8L2 6.4L7 11Z" fill="#6a6a6a"/></svg>
<div class="abs" style="left:854px;top:669px;width:200px;height:19px;background:#fff;border:1px solid #ababab"></div>
<div class="abs" id="status"></div>
<div class="abs" style="left:1029px;top:693px;width:20px;height:26px;background:#185c37"></div>
<svg class="abs" style="left:1034px;top:697px;z-index:6" width="12" height="16" viewBox="0 0 12 16"><path d="M1 1.2V14.4H12M1 1.2H12M1 5.6H12M1 10H12" fill="none" stroke="#fff" stroke-width="1.4"/></svg>
<svg class="abs" style="left:67px;top:697px;z-index:6" width="17" height="17" viewBox="0 0 17 17">
<rect x="3" y="3.4" width="12" height="11.8" fill="none" stroke="#fff" stroke-width="1.3"/>
<path d="M3 7.2h12M3 9.9h12M3 12.6h12M7 7.2v8M11 7.2v8" stroke="#fff" stroke-width="0.9" fill="none"/>
<circle cx="4.2" cy="4.2" r="3.4" fill="#cfe3d6" stroke="#217346" stroke-width="0.8"/>
</svg>
</div></body></html>
